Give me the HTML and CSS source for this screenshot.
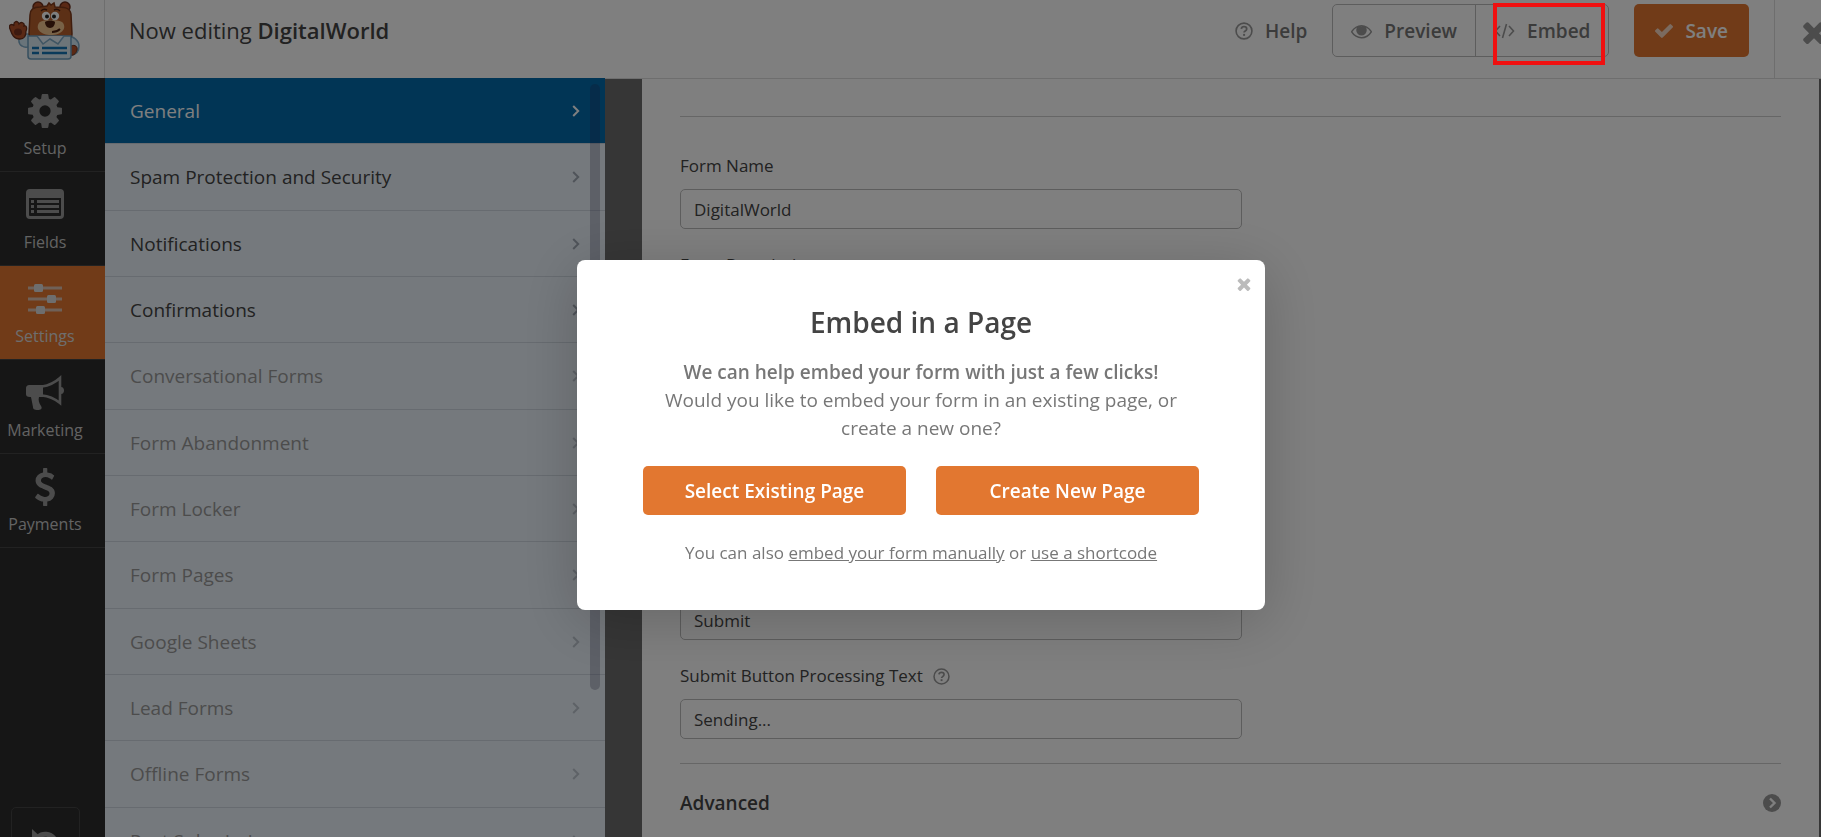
FILE: index.html
```
<!DOCTYPE html>
<html lang="en">
<head>
  <meta charset="UTF-8">
  <meta name="viewport" content="width=device-width, initial-scale=1.0">
  <title>Form Builder - DigitalWorld</title>
  <link rel="stylesheet" href="styles.css">
</head>
<body>

  <!-- Shared icons -->
  <svg class="sprite" aria-hidden="true">
    <symbol id="i-chevron" viewBox="0 0 8 12"><path d="M1.2 1l5 5-5 5" fill="none" stroke="currentColor" stroke-width="2"/></symbol>
    <symbol id="i-help" viewBox="0 0 20 20">
      <circle cx="10" cy="10" r="8.8" fill="none" stroke="currentColor" stroke-width="1.8"/>
      <path d="M7 7.6C7.3 5.8 8.500 5.200 10 5.200c1.800 0 3 1 3 2.500 0 1.300-.8 1.900-1.600 2.400-.8.5-1.300.8-1.300 1.700" fill="none" stroke="currentColor" stroke-width="2"/>
      <rect x="9" y="13.200" width="2.200" height="2.200" fill="currentColor"/>
    </symbol>
    <symbol id="i-close" viewBox="302 238 1188 1316"><path fill="currentColor" d="M1490 1322q0 40-28 68l-136 136q-28 28-68 28t-68-28l-294-294-294 294q-28 28-68 28t-68-28l-136-136q-28-28-28-68t28-68l294-294-294-294q-28-28-28-68t28-68l136-136q28-28 68-28t68 28l294 294 294-294q28-28 68-28t68 28l136 136q28 28 28 68t-28 68l-294 294 294 294q28 28 28 68z"/></symbol>
  </svg>

  <div class="builder">
    <header class="topbar">
      <div class="logo">
        <svg width="72" height="60" viewBox="0 0 72 60" role="img" aria-label="Bear mascot">
          <path d="M12 33c-3 4-3 10 1 12 4 3 11 0 15-4l2-6-12-2z" fill="#d3e8f5" stroke="#7faac6" stroke-width="1.500"/>
          <path d="M58 35c7 0 12 5 12 10 0 4-2 8-7 9z" fill="#d3e8f5" stroke="#7faac6" stroke-width="1.500"/>
          <path d="M62 45c4-2 7 1 6 4-1 4-4 6-7 5z" fill="#b4532a" stroke="#6b2f1b"/>
          <path d="M1 28c-2-4 2-6 4-3-1-5 4-6 5-2 2-3 6-1 5 2 3-1 3 3 2 5 0 5-2 8-6 8-6 0-8-4-10-10z" fill="#b4532a" stroke="#6b2f1b" stroke-width="1.300"/>
          <ellipse cx="9" cy="31" rx="4" ry="3.500" fill="#7a3520"/>
          <circle cx="29" cy="6" r="5" fill="#b4532a" stroke="#6b2f1b" stroke-width="1.500"/>
          <circle cx="56" cy="6" r="5" fill="#b4532a" stroke="#6b2f1b" stroke-width="1.500"/>
          <path d="M21 14c0-6 4-8 10-8l7-1 2-3 2 2 3-2 1 4c8 0 15 0 16 7l1 20c0 5-8 8-21 8S20 38 20 33z" fill="#b9602c" stroke="#7f3a1b" stroke-width="1.500"/>
          <path d="M30 22c2-4 22-4 24 0 4 6-2 12-12 12s-16-6-12-12z" fill="#f0c48f"/>
          <circle cx="37" cy="15" r="4.200" fill="#fff"/><circle cx="46" cy="15" r="4.200" fill="#fff"/>
          <circle cx="38" cy="15.500" r="2" fill="#222"/><circle cx="45" cy="15.500" r="2" fill="#222"/>
          <path d="M32 10c2-2 4-2 6-1M45 9c2-1 4-1 6 1" fill="none" stroke="#4c2010" stroke-width="1.500"/>
          <path d="M36 21c3-2 8-2 10 0 0 3-2 6-5 6s-5-3-5-6z" fill="#4c2010"/>
          <path d="M43 31c4 0 6-1 8-3" fill="none" stroke="#4c2010" stroke-width="1.800"/>
          <path d="M19 35h43v20c0 2-1 3-3 3H22c-2 0-3-1-3-3z" fill="#dbeaf3" stroke="#6d9fbe" stroke-width="1.500"/>
          <path d="M28 35l6 8 7-5 8 5 6-8" fill="#e9f3fa" stroke="#7faac6" stroke-width="1.500"/>
          <path d="M23 47h7M33 47h25M23 52h7M33 52h25" stroke="#1575b5" stroke-width="2.500"/>
        </svg>
      </div>
      <h1 class="form-title">Now editing <strong>DigitalWorld</strong></h1>
      <div class="actions">
        <a class="help" href="#"><svg class="icon-help" width="18" height="18"><use href="#i-help"/></svg>Help</a>
        <div class="btn-group">
          <button type="button" class="btn-light">
            <svg width="21" height="16" viewBox="0 256 1792 1280"><path fill="currentColor" d="M1664 960q-152-236-381-353 61 104 61 225 0 185-131.500 316.500t-316.500 131.500-316.500-131.500-131.500-316.500q0-121 61-225-229 117-381 353 133 205 333.500 326.500t434.500 121.500 434.500-121.500 333.500-326.500zm-720-384q0-20-14-34t-34-14q-125 0-214.500 89.500t-89.500 214.500q0 20 14 34t34 14 34-14 14-34q0-86 61-147t147-61q20 0 34-14t14-34zm848 384q0 34-20 69-140 230-376.500 368.500t-499.500 138.500-499.500-139-376.500-368q-20-35-20-69t20-69q140-229 376.500-368t499.500-139 499.500 139 376.500 368q20 35 20 69z"/><circle cx="896" cy="832" r="330" fill="currentColor"/></svg>
            Preview
          </button>
          <button type="button" class="btn-light embed">
            <svg width="21" height="16" viewBox="0 0 21 16"><path d="M6 3L1.500 8 6 13M15 3l4.500 5-4.500 5M12.500 1l-4 14" fill="none" stroke="currentColor" stroke-width="1.600"/></svg>
            Embed
            <span class="highlight"></span>
          </button>
        </div>
        <button type="button" class="btn-save">
          <svg width="18" height="14" viewBox="121 334 1550 1188"><path fill="currentColor" d="M1671 566q0 40-28 68l-724 724-136 136q-28 28-68 28t-68-28l-136-136-362-362q-28-28-28-68t28-68l136-136q28-28 68-28t68 28l294 295 656-657q28-28 68-28t68 28l136 136q28 28 28 68z"/></svg>
          Save
        </button>
      </div>
      <button type="button" class="exit" aria-label="Exit"><svg width="22" height="24"><use href="#i-close"/></svg></button>
    </header>

    <div class="main">
      <nav class="sidebar">
        <a href="#">
          <svg width="34" height="38" viewBox="128 36 1536 1720"><path fill="currentColor" d="M1152 896q0-106-75-181t-181-75-181 75-75 181 75 181 181 75 181-75 75-181zm512-109v222q0 12-8 23t-20 13l-185 28q-19 54-39 91 35 50 107 138 10 12 10 25t-9 23q-27 37-99 108t-94 71q-12 0-26-9l-138-108q-44 23-91 38-16 136-29 186-7 28-36 28h-222q-14 0-24.500-8.500t-11.500-21.500l-28-184q-49-16-90-37l-141 107q-10 9-25 9-14 0-25-11-126-114-165-168-7-10-7-23 0-12 8-23 15-21 51-66.500t54-70.500q-27-50-41-99l-183-27q-13-2-21-12.500t-8-23.500v-222q0-12 8-23t19-13l186-28q14-46 39-92-40-57-107-138-10-12-10-24 0-10 9-23 26-36 98.500-107.500t94.500-71.500q13 0 26 10l138 107q44-23 91-38 16-136 29-186 7-28 36-28h222q14 0 24.500 8.500t11.500 21.500l28 184q49 16 90 37l142-107q9-9 24-9 13 0 25 10 129 119 165 170 7 8 7 22 0 12-8 23-15 21-51 66.500t-54 70.500q26 50 41 98l183 28q13 2 21 12.500t8 23.500z"/></svg>
          <span>Setup</span>
        </a>
        <a href="#">
          <svg width="38" height="38" viewBox="0 0 38 38"><path fill="currentColor" fill-rule="evenodd" d="M4 3h30a4 4 0 0 1 4 4v22a4 4 0 0 1-4 4H4a4 4 0 0 1-4-4V7a4 4 0 0 1 4-4zM3 12v17q0 1 1 1h30q1 0 1-1V12z"/><path d="M5 15.500h3M5 20.500h3M5 25.500h3M11 15.500h22M11 20.500h22M11 25.500h22" stroke="currentColor" stroke-width="2.800"/></svg>
          <span>Fields</span>
        </a>
        <a href="#" class="active">
          <svg width="34" height="38" viewBox="0 0 34 38"><path d="M0 8h34M0 19h34M0 30h34" stroke="currentColor" stroke-width="3.200" opacity=".75"/><g fill="currentColor"><rect x="6" y="4" width="9" height="8" rx="1.500"/><rect x="19" y="15" width="9" height="8" rx="1.500"/><rect x="8" y="26" width="9" height="8" rx="1.500"/></g></svg>
          <span>Settings</span>
        </a>
        <a href="#">
          <svg width="38" height="38" viewBox="0 0 38 38"><path fill="currentColor" d="M4 11h13v12h-4c-1 3 0 6 2 9 2 3-1 4-3 4-4 0-5-1-5-3l-2-10H4c-3 0-4-1-4-3v-5c0-3 1-4 4-4z"/><path d="M16 12.500c7-1 13-4 18-8.500v25c-5-4-11-7-18-7.500" fill="none" stroke="currentColor" stroke-width="2.600"/><path fill="currentColor" d="M35 13c4 0 4 7 0 7z"/></svg>
          <span>Marketing</span>
        </a>
        <a href="#">
          <svg width="22" height="38" viewBox="380 0 1032 1792"><path fill="currentColor" d="M1362 1185q0 153-99.500 263.500t-258.500 136.500v175q0 14-9 23t-23 9h-135q-13 0-22.500-9.500t-9.500-22.500v-175q-66-9-127.500-31t-101.500-44.500-74-48-46.500-37.500-17.500-18q-17-21-2-41l103-135q7-10 23-12 15-2 24 9l2 2q113 99 243 125 37 8 74 8 81 0 142.500-43t61.500-122q0-28-15-53t-33.500-42-58.500-37.500-66-32-80-32.500q-39-16-61.500-25t-61.500-26.500-62.500-31-56.500-35.500-53.500-42.500-43.500-49-35.500-58-21-66.500-8.500-78q0-138 98-242t255-134v-180q0-13 9.500-22.500t22.500-9.500h135q14 0 23 9t9 23v176q57 6 110.500 23t87 33.500 63.500 37.500 39 29 15 14q17 18 5 38l-81 146q-8 15-23 16-14 3-27-7-3-3-14.500-12t-39-26.500-58.500-32-74.500-26-85.500-11.500q-95 0-155 43t-60 111q0 26 8.500 48t29.500 41.500 39.500 33 56 31 60.500 27 70 27.500q53 20 81 31.500t76 35 75.500 42.500 62 50 53 63.500 31.500 76.500 13 94z"/></svg>
          <span>Payments</span>
        </a>
        <button type="button" class="history" aria-label="Revisions">
          <svg width="28" height="34" viewBox="0 0 28 34"><path d="M6 8a11 11 0 1 1-2 14" fill="none" stroke="currentColor" stroke-width="5"/><path d="M0 0v13h14z" fill="currentColor"/><path d="M14 8v10H9" fill="none" stroke="currentColor" stroke-width="2.500"/></svg>
        </button>
      </nav>

      <div class="panel">
        <ul>
          <li class="active"><a href="#">General<svg width="8" height="12"><use href="#i-chevron"/></svg></a></li>
          <li><a href="#">Spam Protection and Security<svg width="8" height="12"><use href="#i-chevron"/></svg></a></li>
          <li><a href="#">Notifications<svg width="8" height="12"><use href="#i-chevron"/></svg></a></li>
          <li><a href="#">Confirmations<svg width="8" height="12"><use href="#i-chevron"/></svg></a></li>
          <li class="locked"><a href="#">Conversational Forms<svg width="8" height="12"><use href="#i-chevron"/></svg></a></li>
          <li class="locked"><a href="#">Form Abandonment<svg width="8" height="12"><use href="#i-chevron"/></svg></a></li>
          <li class="locked"><a href="#">Form Locker<svg width="8" height="12"><use href="#i-chevron"/></svg></a></li>
          <li class="locked"><a href="#">Form Pages<svg width="8" height="12"><use href="#i-chevron"/></svg></a></li>
          <li class="locked"><a href="#">Google Sheets<svg width="8" height="12"><use href="#i-chevron"/></svg></a></li>
          <li class="locked"><a href="#">Lead Forms<svg width="8" height="12"><use href="#i-chevron"/></svg></a></li>
          <li class="locked"><a href="#">Offline Forms<svg width="8" height="12"><use href="#i-chevron"/></svg></a></li>
          <li class="locked"><a href="#">Post Submissions<svg width="8" height="12"><use href="#i-chevron"/></svg></a></li>
        </ul>
        <div class="scroll-thumb"></div>
      </div>

      <main class="content">
        <form class="settings">
          <div class="field">
            <label for="form-name">Form Name</label>
            <input type="text" id="form-name" value="DigitalWorld">
          </div>
          <div class="field">
            <label for="form-desc">Form Description</label>
            <textarea id="form-desc"></textarea>
          </div>
          <div class="field">
            <label for="form-tags">Tags</label>
            <input type="text" id="form-tags">
          </div>
          <div class="field">
            <label for="submit-text">Submit Button Text</label>
            <input type="text" id="submit-text" value="Submit">
          </div>
          <div class="field">
            <label for="processing-text">Submit Button Processing Text <svg class="icon-help" width="17" height="17"><use href="#i-help"/></svg></label>
            <input type="text" id="processing-text" value="Sending...">
          </div>
        </form>
        <button type="button" class="advanced">
          Advanced
          <svg width="18" height="18" viewBox="0 0 18 18"><circle cx="9" cy="9" r="9" fill="#999"/><path d="M7 4.500l4.500 4.500L7 13.500" fill="none" stroke="#fff" stroke-width="2.400"/></svg>
        </button>
      </main>
    </div>
  </div>

  <!-- Embed popup -->
  <div class="overlay">
    <div class="modal" role="dialog" aria-labelledby="modal-title">
      <button type="button" class="modal-close" aria-label="Close"><svg width="14" height="14"><use href="#i-close"/></svg></button>
      <h2 id="modal-title">Embed in a Page</h2>
      <p><strong>We can help embed your form with just a few clicks!</strong><br>Would you like to embed your form in an existing page, or create a new one?</p>
      <div class="modal-buttons">
        <button type="button">Select Existing Page</button>
        <button type="button">Create New Page</button>
      </div>
      <p class="modal-footer">You can also <a href="#">embed your form manually</a> or <a href="#">use a shortcode</a></p>
    </div>
  </div>

</body>
</html>
```
FILE: styles.css
```
* {
  box-sizing: border-box;
}
body {
  margin: 0;
  font-family: "Open Sans", "Noto Sans", sans-serif;
  font-size: 17px;
  line-height: 24px;
  color: #444;
  background-color: #6d6d6d;
  overflow: hidden;
}
button, input, textarea {
  font-family: inherit;
  font-size: inherit;
  color: inherit;
}
button {
  cursor: pointer;
}
a {
  color: inherit;
  text-decoration: none;
}
strong {
  font-weight: 600;
}
svg {
  flex-shrink: 0;
}
.sprite {
  position: absolute;
  width: 0;
  height: 0;
}
.builder {
  display: flex;
  flex-direction: column;
  height: 100vh;
}

/* top bar */
.topbar {
  display: flex;
  align-items: stretch;
  height: 79px;
  background-color: #fff;
  border-bottom: 1px solid #ddd;
}
.logo {
  width: 105px;
  padding: 1px 0 0 9px;
  border-right: 1px solid #ddd;
}
.form-title {
  margin: 0;
  padding: 14px 24px;
  font-size: 22px;
  line-height: 32px;
  font-weight: 400;
}
.actions {
  display: flex;
  align-items: center;
  gap: 25px;
  height: 53px;
  margin: 4px 25px 0 auto;
  font-size: 19px;
  font-weight: 600;
  color: #777;
}
.help {
  display: flex;
  align-items: center;
  gap: 12px;
}
.icon-help {
  color: #999;
}
.btn-group {
  display: flex;
  height: 100%;
  border: 1px solid #bbb;
  border-radius: 5px;
}
.btn-light, .btn-save {
  display: flex;
  align-items: center;
  gap: 12px;
  padding: 0 18px;
  border: 0;
  background: none;
  font-weight: 600;
}
.btn-light svg {
  color: #999;
}
.embed {
  position: relative;
  border-left: 1px solid #bbb;
}
.highlight {
  position: absolute;
  top: -2px;
  right: 3px;
  bottom: -9px;
  left: 17px;
  border: 4px solid #f01010;
  z-index: 20;
}
.btn-save {
  height: 100%;
  padding: 0 21px;
  border-radius: 5px;
  background-color: #e27730;
  color: #fff;
}
.btn-save svg {
  opacity: 0.7;
}
.exit {
  display: flex;
  width: 47px;
  padding: 20px 0 0 28px;
  border: 0;
  border-left: 1px solid #ddd;
  background: none;
  color: #999;
}

/* left icons */
.main {
  display: flex;
  flex: 1;
  min-height: 0;
  margin-top: -1px;
}
.sidebar {
  display: flex;
  flex-direction: column;
  width: 105px;
  background-color: #2d2d2d;
}
.sidebar a {
  display: flex;
  flex-direction: column;
  align-items: center;
  gap: 6px;
  height: 94px;
  padding: 14px 15px 0 0;
  border-bottom: 1px solid #444;
  font-size: 16px;
  color: #999;
}
.sidebar span {
  color: #c6c6c6;
}
.sidebar .active {
  background-color: #e27730;
  color: #ddd;
}
.sidebar .active span {
  color: #ddd;
}
.history {
  width: 69px;
  height: 68px;
  margin: auto 0 -38px 11px;
  padding: 14px 0 0;
  border: 1px solid #444;
  border-radius: 5px;
  background: none;
  color: #999;
}

/* settings sections */
.panel {
  position: relative;
  width: 500px;
  overflow: hidden;
  background-color: #ebf3fa;
}
.panel ul {
  margin: 0;
  padding: 0;
  list-style: none;
}
.panel li {
  height: 66px;
  border-bottom: 1px solid #ced7e0;
}
.panel li:nth-child(3n+2) {
  height: 67px;
}
.panel a {
  display: flex;
  align-items: center;
  justify-content: space-between;
  height: 100%;
  padding: 0 25px;
  font-size: 19px;
}
.panel svg {
  color: #a0a8b4;
}
.panel .active {
  background-color: #036aab;
  color: #fff;
}
.panel .active svg {
  color: #fff;
}
.panel .locked a {
  color: #999;
}
.panel .locked svg {
  color: #bcc4ce;
}
.scroll-thumb {
  position: absolute;
  top: 6px;
  right: 5px;
  width: 10px;
  height: 606px;
  border-radius: 5px;
  background-color: rgba(40, 40, 80, 0.25);
}

/* form settings */
.content {
  flex: 1;
  min-width: 0;
  margin: 1px 2px 0 37px;
  padding: 37px 38px 0;
  background-color: #fff;
  overflow: hidden;
}
.settings {
  padding-top: 37px;
  border-top: 1px solid #ccc;
  border-bottom: 1px solid #ccc;
}
.field {
  margin-bottom: 24px;
}
.field label {
  display: flex;
  align-items: center;
  gap: 10px;
  height: 24px;
  margin-bottom: 11px;
}
.field input, .field textarea {
  display: block;
  width: 100%;
  max-width: 562px;
  height: 40px;
  padding: 0 13px;
  border: 1px solid #bbb;
  border-radius: 5px;
  background-color: #fff;
}
.field textarea {
  height: 154px;
  resize: none;
}
.advanced {
  display: flex;
  align-items: center;
  justify-content: space-between;
  width: 100%;
  height: 78px;
  padding: 0;
  border: 0;
  background: none;
  font-size: 19px;
  font-weight: 600;
}

/* popup */
.overlay {
  position: fixed;
  inset: 0;
  display: flex;
  align-items: center;
  justify-content: center;
  padding: 33px 0 0 21px;
  background-color: rgba(0, 0, 0, 0.5);
  z-index: 10;
}
.modal {
  position: relative;
  width: 688px;
  padding: 44px 66px 45px;
  border-radius: 8px;
  background-color: #fff;
  box-shadow: 0 10px 60px rgba(0, 0, 0, 0.2);
  text-align: center;
  color: #777;
}
.modal-close {
  position: absolute;
  top: 17px;
  right: 14px;
  display: flex;
  padding: 0;
  border: 0;
  background: none;
  color: #bbb;
}
.modal h2 {
  margin: 0 0 18px;
  font-size: 28px;
  line-height: 36px;
  font-weight: 600;
  color: #444;
}
.modal p {
  margin: 0;
  font-size: 19px;
  line-height: 28px;
}
.modal-buttons {
  display: flex;
  gap: 30px;
  margin: 24px 0 26px;
}
.modal-buttons button {
  flex: 1;
  height: 49px;
  border: 0;
  border-radius: 5px;
  background-color: #e27730;
  font-size: 19px;
  font-weight: 600;
  color: #fff;
}
.modal .modal-footer {
  font-size: 17px;
  line-height: 24px;
}
.modal-footer a {
  text-decoration: underline;
}
```
